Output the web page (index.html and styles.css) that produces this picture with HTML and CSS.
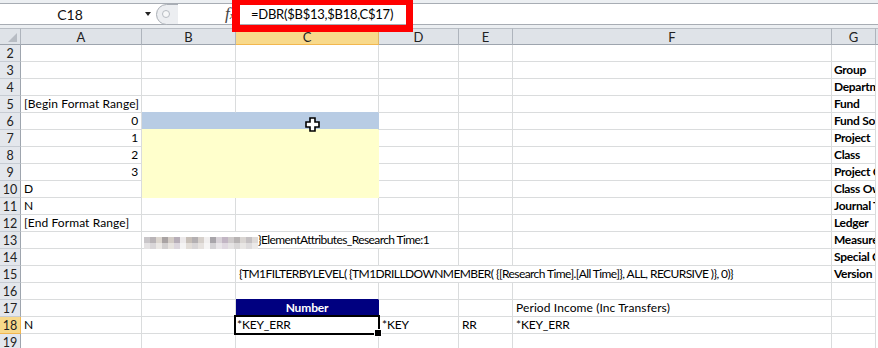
FILE: index.html
```html
<!DOCTYPE html>
<html>
<head>
<meta charset="utf-8">
<link rel="stylesheet" href="styles.css">
</head>
<body>
<div class="app">
  <div class="topstrip"></div>
  <div class="fbar">
    <div class="namebox"><span class="nb-text">C18</span><span class="nb-arrow"></span></div>
    <div class="grip">
      <svg width="22" height="21" viewBox="0 0 22 21">
        <path d="M22 0.5 H10.5 A10 10 0 0 0 10.5 20.5 H22" fill="#eceef1" stroke="#a9aeb5"/>
        <circle cx="10" cy="10" r="3.5" fill="#f6f7f8" stroke="#b7bcc2"/>
      </svg>
    </div>
    <div class="fx">f<span class="fx-x">x</span></div>
    <div class="finput">=DBR($B$13,$B18,C$17)</div>
  </div>
  <div class="gapstrip"></div>
  <div class="sheet">
    <div class="corner"><span class="tri"></span></div>
    <div class="ch">A</div><div class="ch">B</div><div class="ch sel-col">C</div><div class="ch">D</div><div class="ch">E</div><div class="ch">F</div><div class="ch">G</div><div class="chx"></div>

    <div class="rh">2</div><div class="c"></div><div class="c"></div><div class="c"></div><div class="c"></div><div class="c"></div><div class="c"></div><div class="c"></div><div class="x"></div>
    <div class="rh">3</div><div class="c"></div><div class="c"></div><div class="c"></div><div class="c"></div><div class="c"></div><div class="c"></div><div class="c b">Group</div><div class="x"></div>
    <div class="rh">4</div><div class="c"></div><div class="c"></div><div class="c"></div><div class="c"></div><div class="c"></div><div class="c"></div><div class="c b">Department</div><div class="x"></div>
    <div class="rh">5</div><div class="c wide">[Begin Format Range]</div><div class="c above-blue"></div><div class="c above-blue"></div><div class="c"></div><div class="c"></div><div class="c"></div><div class="c b">Fund</div><div class="x"></div>
    <div class="rh">6</div><div class="c r">0</div><div class="c blue span2"></div><div class="c"></div><div class="c"></div><div class="c"></div><div class="c b">Fund Source</div><div class="x"></div>
    <div class="rh">7</div><div class="c r">1</div><div class="c yellow span2"></div><div class="c"></div><div class="c"></div><div class="c"></div><div class="c b">Project</div><div class="x"></div>
    <div class="rh">8</div><div class="c r">2</div><div class="c yellow span2"></div><div class="c"></div><div class="c"></div><div class="c"></div><div class="c b">Class</div><div class="x"></div>
    <div class="rh">9</div><div class="c r">3</div><div class="c yellow span2"></div><div class="c"></div><div class="c"></div><div class="c"></div><div class="c b">Project Group</div><div class="x"></div>
    <div class="rh">10</div><div class="c">D</div><div class="c yellow span2"></div><div class="c"></div><div class="c"></div><div class="c"></div><div class="c b">Class Owner</div><div class="x"></div>
    <div class="rh">11</div><div class="c">N</div><div class="c"></div><div class="c"></div><div class="c"></div><div class="c"></div><div class="c"></div><div class="c b">Journal Type</div><div class="x"></div>
    <div class="rh">12</div><div class="c wide">[End Format Range]</div><div class="c"></div><div class="c"></div><div class="c"></div><div class="c"></div><div class="c"></div><div class="c b">Ledger</div><div class="x"></div>
    <div class="rh">13</div><div class="c"></div><div class="c span3 mos-cell"><svg class="mosaic" width="114" height="12" viewBox="0 0 114 12">
        <rect x="0" y="0" width="114" height="12" fill="#e6e4e4"/>
        <rect x="0" y="0" width="6" height="6" fill="#c9c6c9"/><rect x="6" y="0" width="6" height="6" fill="#b9b4b7"/><rect x="12" y="0" width="6" height="6" fill="#dcd6cf"/><rect x="18" y="0" width="6" height="6" fill="#a9a3a3"/><rect x="24" y="0" width="6" height="6" fill="#d3ccc6"/><rect x="30" y="0" width="6" height="6" fill="#b7aeb8"/><rect x="36" y="0" width="6" height="6" fill="#ece9ea"/><rect x="42" y="0" width="6" height="6" fill="#c7bfb8"/><rect x="48" y="0" width="6" height="6" fill="#b4b0b2"/><rect x="54" y="0" width="6" height="6" fill="#d6d0cb"/><rect x="60" y="0" width="6" height="6" fill="#f1efef"/><rect x="66" y="0" width="6" height="6" fill="#a8a5aa"/><rect x="72" y="0" width="6" height="6" fill="#d8d2d8"/><rect x="78" y="0" width="6" height="6" fill="#c2b6c4"/><rect x="84" y="0" width="6" height="6" fill="#cfcbcb"/><rect x="90" y="0" width="6" height="6" fill="#b8b4b4"/><rect x="96" y="0" width="6" height="6" fill="#d9d5d2"/><rect x="102" y="0" width="6" height="6" fill="#c4c0c2"/><rect x="108" y="0" width="6" height="6" fill="#dedad8"/>
        <rect x="0" y="6" width="6" height="6" fill="#e4e2e3"/><rect x="6" y="6" width="6" height="6" fill="#d9d6d8"/><rect x="12" y="6" width="6" height="6" fill="#ebe8e5"/><rect x="18" y="6" width="6" height="6" fill="#d2cfcf"/><rect x="24" y="6" width="6" height="6" fill="#e7e3df"/><rect x="30" y="6" width="6" height="6" fill="#dcd6dd"/><rect x="36" y="6" width="6" height="6" fill="#f4f3f3"/><rect x="42" y="6" width="6" height="6" fill="#e2ddd8"/><rect x="48" y="6" width="6" height="6" fill="#d8d5d6"/><rect x="54" y="6" width="6" height="6" fill="#e6e2df"/><rect x="60" y="6" width="6" height="6" fill="#f6f5f5"/><rect x="66" y="6" width="6" height="6" fill="#d4d2d5"/><rect x="72" y="6" width="6" height="6" fill="#e9e6e9"/><rect x="78" y="6" width="6" height="6" fill="#dfd8e0"/><rect x="84" y="6" width="6" height="6" fill="#e5e3e3"/><rect x="90" y="6" width="6" height="6" fill="#d9d7d7"/><rect x="96" y="6" width="6" height="6" fill="#e8e6e4"/><rect x="102" y="6" width="6" height="6" fill="#dddbdc"/><rect x="108" y="6" width="6" height="6" fill="#ebe9e8"/>
      </svg><span class="tight13">}ElementAttributes_Research Time:1</span></div><div class="c"></div><div class="c"></div><div class="c b">Measure</div><div class="x"></div>
    <div class="rh">14</div><div class="c"></div><div class="c"></div><div class="c"></div><div class="c"></div><div class="c"></div><div class="c"></div><div class="c b">Special Code</div><div class="x"></div>
    <div class="rh">15</div><div class="c"></div><div class="c"></div><div class="c span4 tight15">{TM1FILTERBYLEVEL( {TM1DRILLDOWNMEMBER( {[Research Time].[All Time]}, ALL, RECURSIVE )}, 0)}</div><div class="c b">Version</div><div class="x"></div>
    <div class="rh">16</div><div class="c"></div><div class="c"></div><div class="c above-navy"></div><div class="c"></div><div class="c"></div><div class="c"></div><div class="c"></div><div class="x"></div>
    <div class="rh">17</div><div class="c"></div><div class="c"></div><div class="c navy">Number</div><div class="c"></div><div class="c"></div><div class="c wide">Period Income (Inc Transfers)</div><div class="c"></div><div class="x"></div>
    <div class="rh sel-row">18</div><div class="c">N</div><div class="c"></div><div class="c selected">*KEY_ERR</div><div class="c">*KEY</div><div class="c">RR</div><div class="c">*KEY_ERR</div><div class="c"></div><div class="x"></div>
    <div class="rh">19</div><div class="c"></div><div class="c"></div><div class="c"></div><div class="c"></div><div class="c"></div><div class="c"></div><div class="c"></div><div class="x"></div>
  </div>
  <div class="redbox"></div>
  <svg class="cursor" width="15" height="15" viewBox="0 0 15 15">
    <path d="M5 1 H10 V5 H14 V10 H10 V14 H5 V10 H1 V5 H5 Z" fill="#fff" stroke="#000" stroke-width="1.6" stroke-linejoin="miter"/>
  </svg>
</div>
</body>
</html>
```
FILE: styles.css
```css
* { box-sizing: border-box; }
html, body { margin: 0; padding: 0; }
body {
  width: 878px;
  height: 348px;
  overflow: hidden;
  background: #fff;
  font-family: Lato, "Open Sans", sans-serif;
}
.app {
  position: relative;
  width: 878px;
  height: 348px;
  overflow: hidden;
}
.topstrip {
  height: 3px;
  background: #eceff2;
}
.fbar {
  height: 22px;
  display: flex;
  align-items: stretch;
  background: #fff;
  border-top: 1px solid #a8adb4;
  border-bottom: 1px solid #a8adb4;
}
.namebox {
  width: 156px;
  display: flex;
  align-items: center;
  position: relative;
}
.nb-text {
  width: 140px;
  text-align: center;
  font-size: 14px;
  color: #111;
}
.nb-arrow {
  width: 0;
  height: 0;
  margin-left: 5px;
  border-left: 3.5px solid transparent;
  border-right: 3.5px solid transparent;
  border-top: 4px solid #222;
}
.grip {
  width: 22px;
  margin-top: -1px;
  margin-bottom: -1px;
  display: flex;
  align-items: center;
}
.grip svg { display: block; }
.fx {
  margin-left: 47px;
  width: 13px;
  font-family: "Liberation Serif", serif;
  font-style: italic;
  font-size: 17px;
  color: #444;
  line-height: 20px;
}
.fx-x { font-size: 11px; }
.finput {
  flex: 1;
  padding-left: 13px;
  font-size: 13px;
  letter-spacing: -0.25px;
  line-height: 20px;
  color: #000;
}
.gapstrip {
  height: 3px;
  background: #eceff2;
}
.sheet {
  display: grid;
  grid-template-columns: 21px 121px 94px 143px 80px 54px 319px 44px 2px;
  grid-auto-rows: 17px;
  font-size: 12px;
  letter-spacing: -0.15px;
  color: #000;
}
.corner {
  background: #dfe3e8;
  border-right: 1px solid #aeb4bc;
  border-bottom: 1px solid #9ea5ae;
  border-top: 1px solid #b9bec5;
  position: relative;
}
.tri {
  position: absolute;
  right: 3px;
  bottom: 2px;
  width: 0;
  height: 0;
  border-left: 9px solid transparent;
  border-bottom: 9px solid #b7bcc3;
}
.ch {
  background: #dfe3e8;
  border-right: 1px solid #aeb4bc;
  border-bottom: 1px solid #9ea5ae;
  border-top: 1px solid #b9bec5;
  display: flex;
  align-items: center;
  justify-content: center;
  font-size: 13px;
  letter-spacing: 0;
  color: #222;
}
.ch.sel-col {
  background: #f8d98b;
  border-top-color: #f2b74f;
  border-bottom-color: #f2b74f;
  border-right-color: #e2b765;
}
.chx {
  background: #dfe3e8;
  border-bottom: 1px solid #9ea5ae;
  border-top: 1px solid #b9bec5;
}
.rh {
  background: #e4e7ec;
  border-right: 1px solid #9ea5ae;
  border-bottom: 1px solid #c7ccd3;
  display: flex;
  align-items: center;
  justify-content: center;
  font-size: 12.5px;
  letter-spacing: 0;
  color: #222;
  padding-top: 1px;
}
.rh.sel-row {
  background: #f8d98b;
  border-bottom-color: #f2b74f;
  border-right-color: #f2b74f;
}
.c {
  border-right: 1px solid #dadcdd;
  border-bottom: 1px solid #dadcdd;
  padding: 0 3px;
  white-space: nowrap;
  overflow: hidden;
  line-height: 16px;
  display: flex;
  align-items: flex-end;
}
.wide { letter-spacing: 0.1px; }
.tight13 { letter-spacing: -0.6px; }
.tight15 { letter-spacing: -0.58px; }
.x { background: #fff; }
.r { justify-content: flex-end; }
.b { font-weight: bold; padding-left: 2px; letter-spacing: -0.3px; }
.span2 { grid-column: span 2; }
.span3 { grid-column: span 3; }
.span4 { grid-column: span 4; }
.blue {
  background: #b8cce4;
  border-right-color: #b8cce4;
  border-bottom-color: #ffffcc;
}
.yellow {
  background: #ffffcc;
  border-right-color: #ffffcc;
  border-bottom-color: #ffffcc;
}
.above-blue { border-bottom-color: #b8cce4; }
.above-navy { border-bottom-color: #000080; }
.navy {
  background: #000080;
  border-right-color: #000080;
  border-bottom-color: #000080;
  color: #fff;
  font-weight: bold;
  justify-content: center;
}
.mos-cell {
  padding-left: 2px;
  overflow: visible;
}
.mosaic {
  display: block;
  margin-bottom: -1px;
  flex: none;
}
.selected {
  position: relative;
  overflow: visible;
  padding-left: 1px;
}
.selected::after {
  content: "";
  position: absolute;
  left: -2px;
  top: -2px;
  right: -2px;
  bottom: -2px;
  border: 2px solid #000;
}
.selected::before {
  content: "";
  position: absolute;
  right: -4px;
  bottom: -4px;
  width: 6px;
  height: 6px;
  background: #000;
  border: 1px solid #fff;
  z-index: 2;
}
.redbox {
  position: absolute;
  left: 232px;
  top: 0;
  width: 181px;
  height: 32px;
  border-style: solid;
  border-color: #ff0000;
  border-width: 5px 7px 7px 8px;
}
.cursor {
  position: absolute;
  left: 305px;
  top: 117px;
}
```
